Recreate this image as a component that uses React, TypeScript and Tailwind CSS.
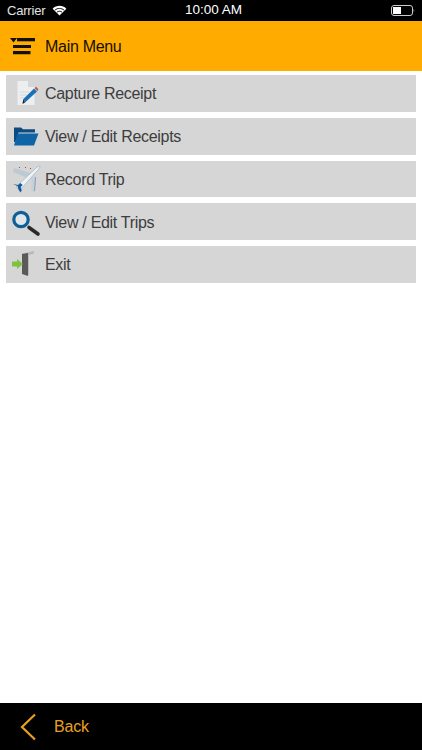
import React from "react";

const CaptureIcon = () => (
  <svg width="28" height="28" viewBox="0 0 28 28">
    <path d="M5.500 2h10.500l6.500 6v18h-17z" fill="#eceef0" />
    <path d="M16 2l6.500 6H16z" fill="#d2d6da" />
    <path d="M8 13h9M8 16h7M8 19h5" stroke="#d6d9dc" strokeWidth="1.200" />
    <path d="M13 23.500l-1.800-3.200L22 9.500l3 3z" fill="#1c70b8" />
    <path d="M22.600 9l1.400-1.200 2.400 2.400-1 1.800z" fill="#b9553f" />
    <path d="M11.200 20.300L10.500 25l2.500-1.500z" fill="#1d1d1d" />
  </svg>
);
const FolderIcon = () => (
  <svg width="28" height="24" viewBox="0 0 28 24">
    <path d="M2 3.500h7l2 1.700h12V8.500H6.500L3.500 18 2 18z" fill="#0c4a80" />
    <path d="M5.500 9.500h21L22 21.500H2z" fill="#0f64a6" />
  </svg>
);
const PlaneIcon = () => (
  <svg width="30" height="30" viewBox="0 0 30 30">
    <path d="M3 4l20 6-4 5L2 8z" fill="#bccad5" />
    <path d="M20 12l5 1-1 16-3.500-2z" fill="#c5d1da" />
    <path d="M24.500 13l-1 14" stroke="#8c9eac" strokeWidth="1" />
    <path d="M5 23L24 5c2-2 4.500-3.500 5-3s-1 3-3 5L9 26z" fill="#f0f3f6" stroke="#a7b7c3" strokeWidth=".8" />
    <path d="M2 20l4.500 2 1 3.500 2 3 1.200-2-1-3.500 2-2-2.500-2-2 2z" fill="#145c9b" />
    <path d="M8 4l1-1M14 4l1-1M19 5l1-1" stroke="#b04040" strokeWidth="1" />
  </svg>
);
const SearchIcon = () => (
  <svg width="30" height="30" viewBox="0 0 30 30">
    <path d="M18 20.500l9 6.500" stroke="#2a2a2a" strokeWidth="3.600" strokeLinecap="round" />
    <circle cx="10" cy="12.500" r="7.200" fill="#dde7ec" stroke="#0f5f96" strokeWidth="3.200" />
  </svg>
);
const ExitIcon = () => (
  <svg width="28" height="28" viewBox="0 0 28 28">
    <path d="M10 3.500L22 1v2.500l-5 1.500v20l-4 0z" fill="#b9b9b9" />
    <path d="M10 4l6-1v23l-6-2z" fill="#5a5a5a" />
    <path d="M0 11.500h5V9l6 5-6 5v-2.500H0z" fill="#7fc241" />
  </svg>
);
const MenuIcon = () => (
  <svg width="28" height="18" viewBox="0 0 28 18">
    <path d="M1 1h7L4.500 5.500z" fill="#111" />
    <path d="M8 1h18v3.300H8z" fill="#111" />
    <path d="M4 8h18v3H4zM4 14h17.500v3.200H4z" fill="#111" />
  </svg>
);

const items: [string, React.ReactNode][] = [
  ["Capture Receipt", <CaptureIcon />],
  ["View / Edit Receipts", <FolderIcon />],
  ["Record Trip", <PlaneIcon />],
  ["View / Edit Trips", <SearchIcon />],
  ["Exit", <ExitIcon />],
];

export default function App() {
  return (
    <div className="w-[422px] h-[750px] flex flex-col bg-white font-['Liberation_Sans',Arial,sans-serif] overflow-hidden">
      <div className="h-[21px] bg-black text-white flex items-center justify-between pl-[7px] pr-[7px] relative">
        <div className="flex items-center gap-[7px]">
          <span className="text-[13px] tracking-[-0.2px] text-[#e4e4e4]">Carrier</span>
          <svg width="15" height="11" viewBox="0 0 16 12">
            <path d="M8 11.500L.5 4C4.800-.2 11.200-.2 15.500 4z" fill="#fff" />
            <path d="M3 5.600c2.900-2.500 7.100-2.500 10 0M5.200 7.800c1.700-1.300 3.900-1.300 5.600 0" stroke="#000" strokeWidth="1" fill="none" />
          </svg>
        </div>
        <span className="absolute left-[185px] text-[13.500px] font-medium">10:00 AM</span>
        <svg width="24" height="11" viewBox="0 0 24 11">
          <rect x=".5" y=".5" width="21" height="10" rx="2.500" fill="none" stroke="#ccc" />
          <rect x="2" y="2" width="8" height="7" fill="#fff" />
          <path d="M22.500 4c1 .3 1 2.700 0 3z" fill="#888" />
        </svg>
      </div>
      <div className="h-[50px] bg-[#ffab00] flex items-center pl-[9px] gap-[8px]">
        <MenuIcon />
        <span className="text-[16px] tracking-[-0.3px] text-[#150f00] pt-[1px]">Main Menu</span>
      </div>
      <div className="flex-1 flex flex-col gap-[6px] pt-[4px] pl-[6px]">
        {items.map(([label, icon]) => (
          <div key={label} className="h-[36.750px] w-[410px] bg-[#d6d6d6] flex items-center">
            <div className="w-[39px] flex justify-center shrink-0">{icon}</div>
            <span className="text-[16px] tracking-[-0.3px] text-[#3d3d3d] pt-[2px]">{label}</span>
          </div>
        ))}
      </div>
      <div className="h-[47px] bg-black flex items-center pl-[20px] gap-[18px]">
        <svg width="16" height="28" viewBox="0 0 16 28">
          <path d="M15 1.500L2 14l13 12.500" fill="none" stroke="#e8a020" strokeWidth="2.200" />
        </svg>
        <span className="text-[16px] tracking-[-0.2px] text-[#e8a020]">Back</span>
      </div>
    </div>
  );
}
